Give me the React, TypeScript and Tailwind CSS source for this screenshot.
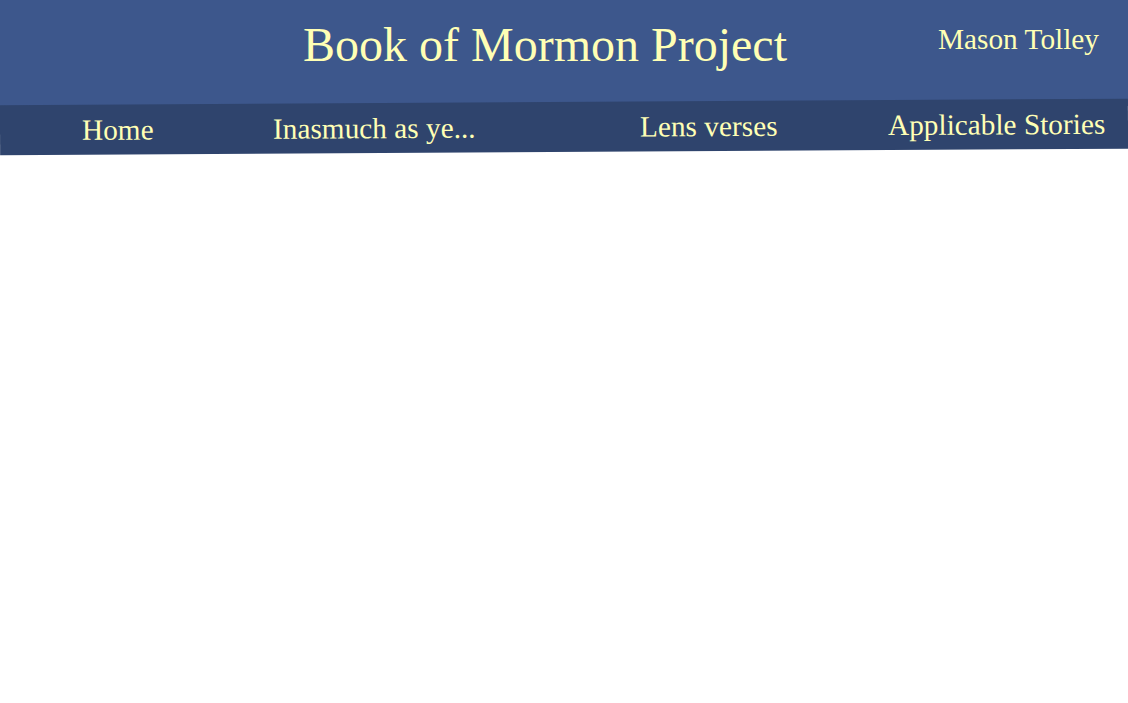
const navLinks = [
  { label: "Home", width: "w-[191px]" },
  { label: "Inasmuch as ye...", width: "w-[367px]" },
  { label: "Lens verses", width: "w-[248px]" },
  { label: "Applicable Stories", width: "w-auto" },
];

const App = () => {
  return (
    <div className="min-h-screen bg-white font-['Liberation_Serif','Times_New_Roman',serif] text-[#ffffb5]">
      {/* header runs a few px under the tilted nav so no white shows through */}
      <header className="flex h-[106px] items-start bg-[#3d578c]">
        <h1 className="ml-[303px] mt-[17px] text-[48px] leading-[55px] font-normal">
          Book of Mormon Project
        </h1>
        <span className="ml-auto mr-[29px] mt-[23px] text-[29.3px] leading-[33px]">
          Mason Tolley
        </span>
      </header>

      <nav className="relative -mt-1 rotate-[-0.34deg] bg-[#2f446d] pt-[9px] pb-2">
        <ul className="flex pl-[82px]">
          {navLinks.map((link) => (
            <li key={link.label} className={`${link.width} shrink-0`}>
              <a href="#" className="text-[29.3px] leading-[33px]">
                {link.label}
              </a>
            </li>
          ))}
        </ul>
      </nav>
    </div>
  );
};

export default App;
